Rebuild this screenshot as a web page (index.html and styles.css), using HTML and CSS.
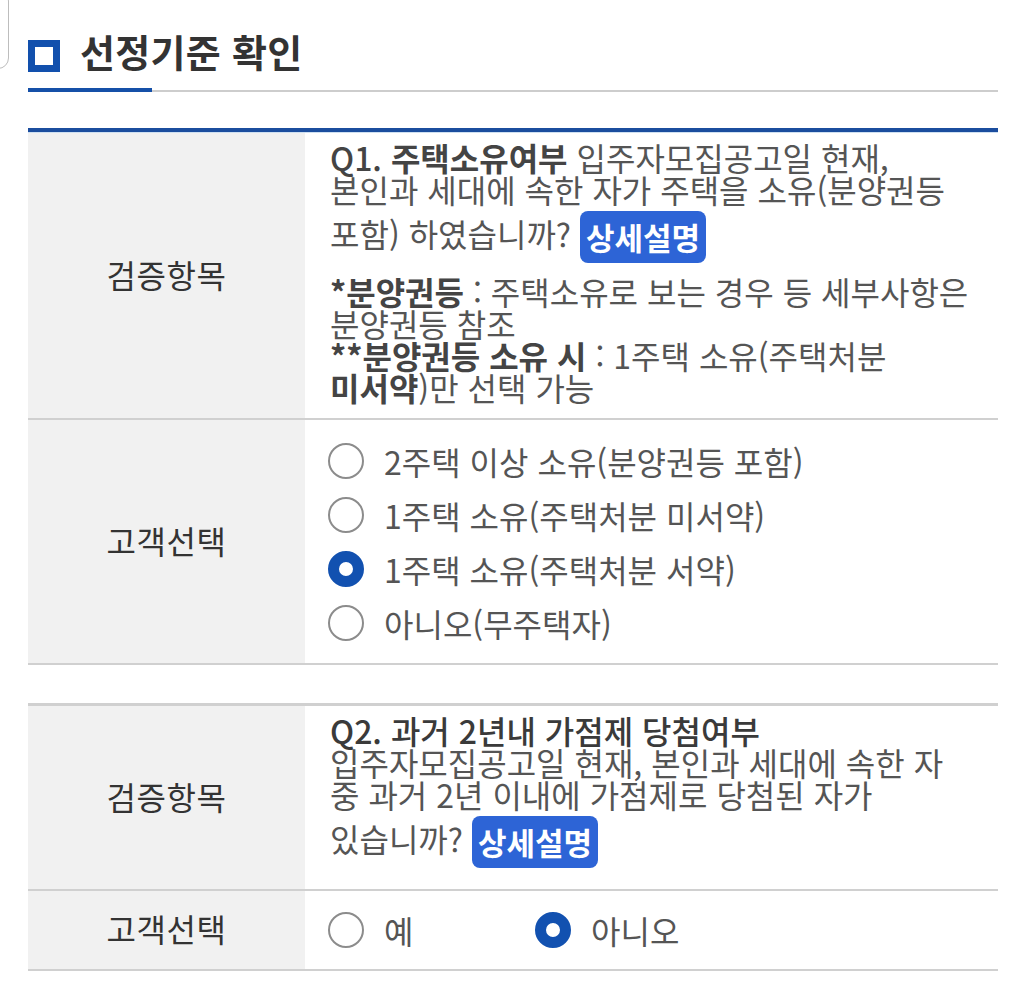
FILE: index.html
```html
<!DOCTYPE html>
<html lang="ko">
<head>
<meta charset="utf-8">
<title>선정기준 확인</title>
<link rel="stylesheet" href="styles.css">
</head>
<body>
<div class="page">
  <div class="corner"></div>
  <div class="header">
    <span class="sq"></span>
    <h1 class="title">선정기준 확인</h1>
  </div>
  <div class="underline"><span class="ul-blue"></span><span class="ul-gray"></span></div>

  <div class="table table-first">
    <div class="inner">
      <div class="row">
        <div class="label">검증항목</div>
        <div class="cell cell-q">
          <p class="q"><span class="qn">Q1.</span> <b>주택소유여부</b> 입주자모집공고일 현재, 본인과 세대에 속한 자가 주택을 소유(분양권등 포함) 하였습니까? <span class="btn">상세설명</span></p>
          <p class="note"><b>*분양권등</b> : 주택소유로 보는 경우 등 세부사항은 분양권등 참조<br><b>**분양권등 소유 시</b> : 1주택 소유(주택처분 <b>미서약</b>)만 선택 가능</p>
        </div>
      </div>
      <div class="row">
        <div class="label">고객선택</div>
        <div class="cell cell-r">
          <div class="radio"><span class="dot"></span><span>2주택 이상 소유(분양권등 포함)</span></div>
          <div class="radio"><span class="dot"></span><span>1주택 소유(주택처분 미서약)</span></div>
          <div class="radio"><span class="dot on"></span><span>1주택 소유(주택처분 서약)</span></div>
          <div class="radio"><span class="dot"></span><span>아니오(무주택자)</span></div>
        </div>
      </div>
    </div>
  </div>

  <div class="table table-second">
    <div class="row">
      <div class="label">검증항목</div>
      <div class="cell cell-q2">
        <p class="q"><span class="qt">Q2. 과거 2년내 가점제 당첨여부</span><br>입주자모집공고일 현재, 본인과 세대에 속한 자 중 과거 2년 이내에 가점제로 당첨된 자가 있습니까? <span class="btn">상세설명</span></p>
      </div>
    </div>
    <div class="row">
      <div class="label">고객선택</div>
      <div class="cell cell-r2">
        <div class="radio radio-inline"><span class="dot"></span><span>예</span></div>
        <div class="radio"><span class="dot on"></span><span>아니오</span></div>
      </div>
    </div>
  </div>
</div>
</body>
</html>
```

FILE: styles.css
```css
* { box-sizing: border-box; }
html, body { margin: 0; padding: 0; background: #fff; }
body {
  font-family: "Noto Sans CJK KR", "Noto Sans", sans-serif;
  color: #555;
  overflow: hidden;
}
.page {
  position: relative;
  width: 1024px;
  padding: 0 26px 0 28px;
}
.corner {
  position: absolute;
  left: -20px;
  top: -10px;
  width: 29px;
  height: 79px;
  border: 1.5px solid #bdbdbd;
  border-radius: 11px;
}
.header {
  display: flex;
  align-items: center;
  gap: 20px;
  padding-top: 32px;
  height: 80px;
}
.sq {
  width: 32px;
  height: 32px;
  border: 7px solid #1250ad;
  flex: none;
}
.title {
  margin: 0;
  font-size: 38px;
  line-height: 48px;
  font-weight: 700;
  color: #333;
  position: relative;
  top: -5px;
  letter-spacing: 0.3px;
}
.underline {
  display: flex;
  align-items: flex-end;
  margin-top: 8px;
  height: 4px;
}
.ul-blue { width: 124px; height: 4px; background: #1550a8; }
.ul-gray { flex: 1; height: 2px; background: #cdcdcd; }

.table { width: 970px; }
.table-first {
  margin-top: 36px;
  border-top: 4px solid #1b4d9e;
}
.table-first .inner { border-top: 1px solid #cfe0f1; }
.table-second {
  margin-top: 38px;
  border-top: 3px solid #d0d0d0;
}
.row {
  display: grid;
  grid-template-columns: 277px 1fr;
  border-bottom: 2px solid #d0d0d0;
}
.label {
  background: #f1f1f1;
  display: flex;
  align-items: center;
  justify-content: center;
  font-size: 32px;
  letter-spacing: 0.5px;
  color: #333;
  padding-bottom: 4px;
}
.cell { background: #fff; }
.cell-q { padding: 8px 28px 15px 25px; }
.cell-q2 { padding: 8px 28px 13px 25px; }
p { margin: 0; }
.q, .note {
  font-size: 32px;
  line-height: 32px;
  word-break: keep-all;
  color: #555;
}
.q b, .note b { font-weight: 700; color: #444; }
.qn { font-weight: 500; color: #444; }
.qt { font-weight: 500; color: #3a3a3a; }
.note { margin-top: 4px; }
.btn {
  display: inline-block;
  vertical-align: middle;
  background: #2d64d6;
  color: #fff;
  font-weight: 700;
  font-size: 31px;
  line-height: 38px;
  padding: 7px 6px;
  border-radius: 8px;
  margin: 8px 0 6px;
  position: relative;
  top: -2px;
}
.cell-r { padding: 14px 0 13px 23px; }
.radio {
  display: flex;
  align-items: center;
  gap: 20px;
  height: 54px;
  font-size: 32px;
  color: #555;
}
.dot {
  width: 36px;
  height: 36px;
  border-radius: 50%;
  border: 2px solid #8c8c8c;
  background: #fff;
  flex: none;
}
.dot.on {
  border: 11px solid #1251b0;
}
.cell-r2 {
  display: flex;
  align-items: center;
  padding: 12px 0 12px 23px;
}
.radio-inline { width: 207px; }
```
